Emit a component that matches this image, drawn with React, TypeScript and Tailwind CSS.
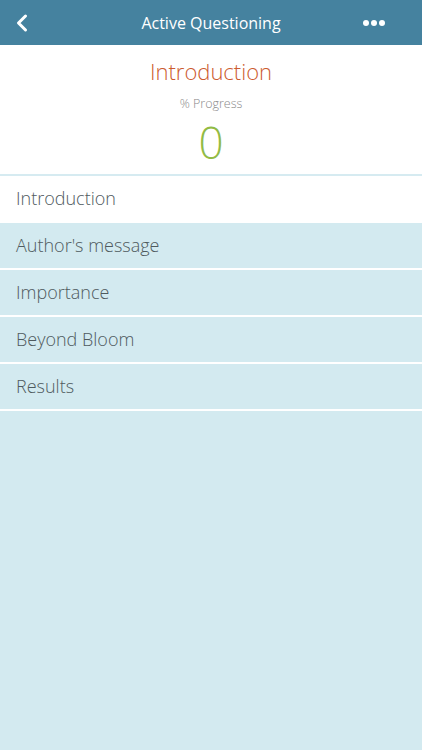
import { ChevronLeft } from 'lucide-react';

const chapters = ['Introduction', "Author's message", 'Importance', 'Beyond Bloom', 'Results'];

export default function App() {
  return (
    <div
      className="w-[422px] h-[750px] bg-[#d3eaf0] flex flex-col overflow-hidden"
      style={{ fontFamily: '"Open Sans", "Liberation Sans", sans-serif' }}
    >
      {/* top bar */}
      <div className="h-[45px] bg-[#45829f] grid grid-cols-[70px_1fr_70px] items-center shrink-0">
        <div className="pl-[8px]">
          <ChevronLeft className="w-[28px] h-[28px] text-white" strokeWidth={2.6} />
        </div>
        <span className="text-white text-[16px] leading-none text-center">Active Questioning</span>
        <div className="flex gap-[2px] justify-end pr-[37px]">
          <span className="w-[6px] h-[6px] rounded-full bg-white" />
          <span className="w-[6px] h-[6px] rounded-full bg-white" />
          <span className="w-[6px] h-[6px] rounded-full bg-white" />
        </div>
      </div>

      {/* progress block */}
      <div className="bg-white h-[131px] flex flex-col items-center border-b-2 border-[#d6ebf1] shrink-0">
        <div className="mt-[12px] text-[22px] leading-[28px] font-light text-[#cc5b2f]">Introduction</div>
        <div className="mt-[11px] text-[12.5px] leading-[16px] font-light text-[#8a8a8a]">% Progress</div>
        <div className="mt-[8px] text-[44px] leading-[44px] font-light text-[#92bb45]">0</div>
      </div>

      {/* chapter list */}
      <div className="flex flex-col">
        {chapters.map((c, i) => (
          <div
            key={c}
            className={`h-[47px] flex items-center px-[16px] border-b-2 border-white text-[18px] font-light text-[#4f5a5e] ${
              i === 0 ? 'bg-white' : 'bg-[#d3eaf0]'
            }`}
          >
            {c}
          </div>
        ))}
      </div>
    </div>
  );
}
